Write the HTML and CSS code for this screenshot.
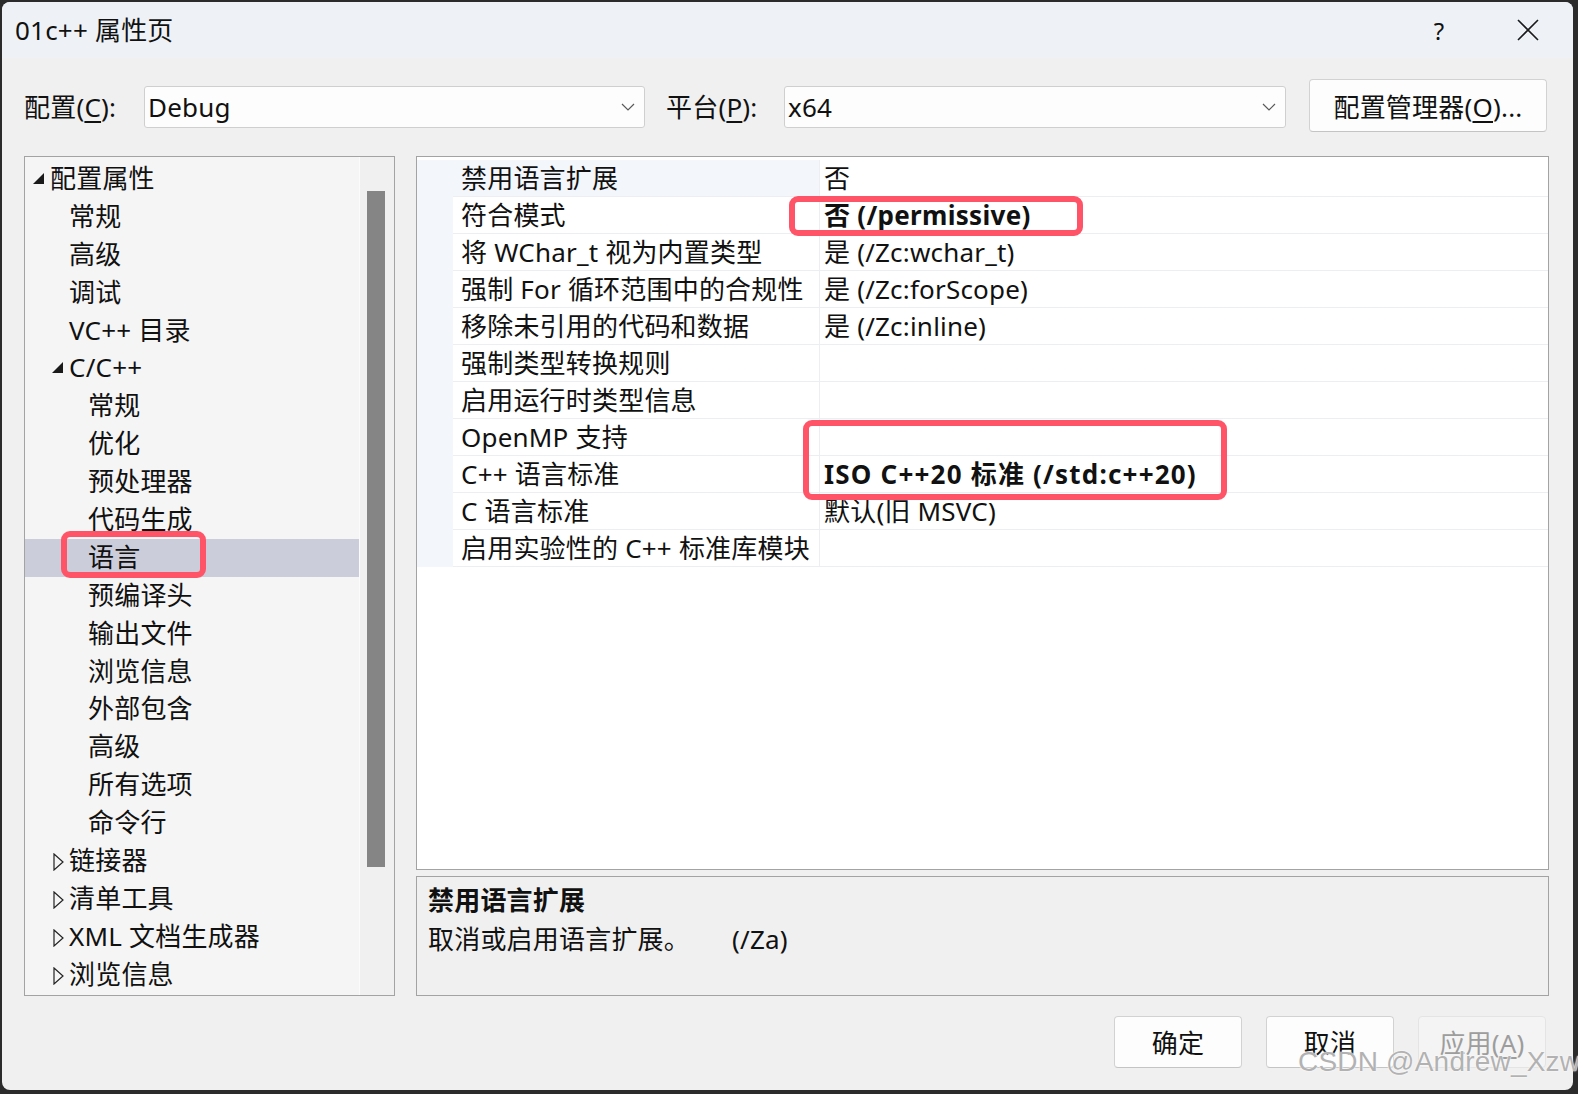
FILE: index.html
```html
<!DOCTYPE html>
<html lang="zh-CN">
<head>
  <meta charset="UTF-8">
  <meta name="viewport" content="width=device-width, initial-scale=1.0">
  <title>01c++ 属性页</title>
  <link rel="stylesheet" href="styles.css">
</head>
<body>
  <div class="window">
    <div class="titlebar">
      <span class="title">01c++ 属性页</span>
      <span class="help">?</span>
      <span class="close">
        <svg width="24" height="24" viewBox="0 0 24 24"><path d="M2 2 L22 22 M22 2 L2 22" stroke="#1a1a1a" stroke-width="1.6" fill="none"/></svg>
      </span>
    </div>

    <div class="content">
      <div class="config-row">
        <label class="cfg-label cfg-label-1">配置(<u>C</u>):</label>
        <div class="combo combo-1">
          <span>Debug</span>
          <svg class="chevron" width="14" height="8" viewBox="0 0 14 8"><path d="M1 1 L7 7 L13 1" stroke="#5a5a5a" stroke-width="1.2" fill="none"/></svg>
        </div>
        <label class="cfg-label cfg-label-2">平台(<u>P</u>):</label>
        <div class="combo combo-2">
          <span>x64</span>
          <svg class="chevron" width="14" height="8" viewBox="0 0 14 8"><path d="M1 1 L7 7 L13 1" stroke="#5a5a5a" stroke-width="1.2" fill="none"/></svg>
        </div>
        <button class="btn btn-manager">配置管理器(<u>O</u>)...</button>
      </div>

      <div class="main">
        <div class="tree">
          <div class="tree-list">
            <div class="node lvl-0"><span class="toggle open"></span>配置属性</div>
            <div class="node lvl-1"><span class="toggle"></span>常规</div>
            <div class="node lvl-1"><span class="toggle"></span>高级</div>
            <div class="node lvl-1"><span class="toggle"></span>调试</div>
            <div class="node lvl-1"><span class="toggle"></span>VC++ 目录</div>
            <div class="node lvl-1"><span class="toggle open"></span>C/C++</div>
            <div class="node lvl-2"><span class="toggle"></span>常规</div>
            <div class="node lvl-2"><span class="toggle"></span>优化</div>
            <div class="node lvl-2"><span class="toggle"></span>预处理器</div>
            <div class="node lvl-2"><span class="toggle"></span>代码生成</div>
            <div class="node lvl-2 selected"><span class="toggle"></span>语言</div>
            <div class="node lvl-2"><span class="toggle"></span>预编译头</div>
            <div class="node lvl-2"><span class="toggle"></span>输出文件</div>
            <div class="node lvl-2"><span class="toggle"></span>浏览信息</div>
            <div class="node lvl-2"><span class="toggle"></span>外部包含</div>
            <div class="node lvl-2"><span class="toggle"></span>高级</div>
            <div class="node lvl-2"><span class="toggle"></span>所有选项</div>
            <div class="node lvl-2"><span class="toggle"></span>命令行</div>
            <div class="node lvl-1"><span class="toggle closed"></span>链接器</div>
            <div class="node lvl-1"><span class="toggle closed"></span>清单工具</div>
            <div class="node lvl-1"><span class="toggle closed"></span>XML 文档生成器</div>
            <div class="node lvl-1"><span class="toggle closed"></span>浏览信息</div>
          </div>
          <div class="scrollbar"><div class="thumb"></div></div>
        </div>

        <div class="right">
          <div class="grid">
            <div class="prop current"><span class="gut"></span><span class="name">禁用语言扩展</span><span class="value">否</span></div>
            <div class="prop"><span class="gut"></span><span class="name">符合模式</span><span class="value bold">否 (/permissive)</span></div>
            <div class="prop"><span class="gut"></span><span class="name">将 WChar_t 视为内置类型</span><span class="value">是 (/Zc:wchar_t)</span></div>
            <div class="prop"><span class="gut"></span><span class="name">强制 For 循环范围中的合规性</span><span class="value">是 (/Zc:forScope)</span></div>
            <div class="prop"><span class="gut"></span><span class="name">移除未引用的代码和数据</span><span class="value">是 (/Zc:inline)</span></div>
            <div class="prop"><span class="gut"></span><span class="name">强制类型转换规则</span><span class="value"></span></div>
            <div class="prop"><span class="gut"></span><span class="name">启用运行时类型信息</span><span class="value"></span></div>
            <div class="prop"><span class="gut"></span><span class="name">OpenMP 支持</span><span class="value"></span></div>
            <div class="prop"><span class="gut"></span><span class="name">C++ 语言标准</span><span class="value bold wide">ISO C++20 标准 (/std:c++20)</span></div>
            <div class="prop"><span class="gut"></span><span class="name">C 语言标准</span><span class="value">默认(旧 MSVC)</span></div>
            <div class="prop"><span class="gut"></span><span class="name">启用实验性的 C++ 标准库模块</span><span class="value"></span></div>
          </div>
          <div class="desc">
            <div class="desc-title">禁用语言扩展</div>
            <div class="desc-text">取消或启用语言扩展。<span class="switch">(/Za)</span></div>
          </div>
        </div>
      </div>

      <div class="buttons">
        <button class="btn">确定</button>
        <button class="btn">取消</button>
        <button class="btn disabled">应用(<u>A</u>)</button>
      </div>
    </div>

    <div class="mark mark-mode"></div>
    <div class="mark mark-std"></div>
    <div class="mark mark-lang"></div>
  </div>
  <div class="watermark">CSDN @Andrew_Xzw</div>
</body>
</html>
```

FILE: styles.css
```css
body {
  margin: 0;
  width: 1578px;
  height: 1094px;
  background-color: #2b2b2b;
  font-family: "Noto Sans", "Noto Sans CJK SC", sans-serif;
  font-size: 26px;
  letter-spacing: 0.2px;
  color: #111;
  overflow: hidden;
  position: relative;
}
u {
  text-decoration-thickness: 1.5px;
  text-underline-offset: 4px;
}
.window {
  position: relative;
  margin: 2px 0 0 2px;
  width: 1571px;
  height: 1088px;
  border-radius: 8px;
  background-color: #f0f0f0;
  overflow: hidden;
}
.titlebar {
  height: 56px;
  background-color: #eef2f7;
  display: flex;
  align-items: center;
  padding-left: 13px;
}
.title {
  flex: 1;
  line-height: 56px;
  margin-top: -1px;
}
.help {
  width: 30px;
  margin-right: 62px;
  text-align: center;
  font-size: 24px;
}
.close {
  width: 24px;
  height: 24px;
  margin-right: 33px;
  display: flex;
}

.content {
  padding: 0 24px 0 22px;
}
.config-row {
  display: flex;
  align-items: center;
  height: 53px;
  margin-top: 21px;
}
.cfg-label {
  white-space: nowrap;
}
.cfg-label-1 {
  width: 120px;
}
.cfg-label-2 {
  width: 118px;
  margin-left: 21px;
}
.combo {
  border: 1px solid #cfcfcf;
  border-radius: 3px;
  background-color: #fdfdfd;
  display: flex;
  align-items: center;
  justify-content: space-between;
  padding: 0 9px 0 3px;
  box-sizing: border-box;
  height: 42px;
  margin-top: 2px;
}
.combo-1 {
  width: 501px;
}
.combo-2 {
  width: 502px;
}
.chevron {
  margin-top: 1px;
}
.btn {
  font-family: inherit;
  font-size: 26px;
  letter-spacing: 0.2px;
  color: #111;
  background-color: #fdfdfd;
  border: 1px solid #d2d2d2;
  border-bottom-color: #c4c4c4;
  border-radius: 4px;
  padding: 0;
  height: 52px;
  width: 128px;
}
.btn-manager {
  width: 238px;
  height: 53px;
  margin-left: 23px;
}
.btn.disabled {
  color: #9d9d9d;
  background-color: #f4f4f4;
  border-color: #e4e4e4;
}

.main {
  display: flex;
  gap: 21px;
  margin-top: 24px;
  height: 840px;
}
.tree {
  width: 371px;
  border: 1px solid #a3a3a3;
  box-sizing: border-box;
  background-color: #f5f5f5;
  display: flex;
}
.tree-list {
  flex: 1;
  padding-top: 3px;
}
.node {
  height: 37.9px;
  line-height: 37.9px;
  display: flex;
  align-items: center;
  white-space: nowrap;
}
.node.selected {
  background-color: #cbcdda;
}
.lvl-0 { padding-left: 6px; }
.lvl-1 { padding-left: 25px; }
.lvl-2 { padding-left: 44px; }
.toggle {
  width: 19px;
  height: 37.9px;
  position: relative;
  flex: none;
}
.toggle.open::before {
  content: "";
  position: absolute;
  left: 2px;
  top: 13px;
  border-style: solid;
  border-width: 0 0 11px 11px;
  border-color: transparent transparent #1a1a1a transparent;
}
.toggle.closed::before {
  content: "";
  position: absolute;
  left: 3px;
  top: 11px;
  width: 11px;
  height: 18px;
  background: no-repeat url("data:image/svg+xml,%3Csvg xmlns='http://www.w3.org/2000/svg' width='11' height='18'%3E%3Cpath d='M1 1 L10 9 L1 17 Z' fill='none' stroke='%23222' stroke-width='1.2'/%3E%3C/svg%3E");
}
.scrollbar {
  width: 34px;
  border-left: 1px solid #fbfbfb;
  background-color: #f0f0f0;
  position: relative;
}
.thumb {
  position: absolute;
  left: 7px;
  top: 34px;
  width: 18px;
  height: 676px;
  background-color: #858585;
}

.right {
  flex: 1;
  display: flex;
  flex-direction: column;
  gap: 6px;
}
.grid {
  height: 714px;
  border: 1px solid #a3a3a3;
  box-sizing: border-box;
  background-color: #fff;
  padding-top: 3px;
}
.prop {
  display: flex;
  height: 37px;
  line-height: 36px;
  white-space: nowrap;
}
.gut {
  width: 36px;
  background-color: #f3f6fb;
  flex: none;
}
.name {
  width: 358px;
  padding-left: 8px;
  border-right: 1px solid #eceef2;
  border-bottom: 1px solid #eceef2;
}
.value {
  flex: 1;
  padding-left: 4px;
  border-bottom: 1px solid #eceef2;
}
.prop.current .name {
  background-color: #f3f6fb;
}
.bold {
  font-weight: bold;
  letter-spacing: 0.3px;
}
.bold.wide {
  letter-spacing: 1.2px;
}
.desc {
  flex: 1;
  border: 1px solid #a3a3a3;
  background-color: #f0f0f0;
  padding: 4px 11px;
}
.desc-title {
  font-weight: bold;
  line-height: 38px;
}
.desc-text {
  line-height: 40px;
}
.switch {
  margin-left: 42px;
}

.buttons {
  display: flex;
  justify-content: flex-end;
  gap: 24px;
  margin-top: 20px;
  padding-right: 3px;
}

.mark {
  position: absolute;
  border: 6px solid #ff5468;
  border-radius: 9px;
  box-sizing: border-box;
}
.mark-mode {
  left: 787px;
  top: 194px;
  width: 294px;
  height: 40px;
}
.mark-std {
  left: 801px;
  top: 418px;
  width: 424px;
  height: 80px;
}
.mark-lang {
  left: 59px;
  top: 529px;
  width: 145px;
  height: 47px;
}
.watermark {
  position: absolute;
  left: 1298px;
  top: 1046px;
  font-family: "Liberation Sans", sans-serif;
  font-size: 28px;
  color: #b2b2b2;
  text-shadow: 0 0 2px #fff, 0 0 1px #fff;
  white-space: nowrap;
}
```
